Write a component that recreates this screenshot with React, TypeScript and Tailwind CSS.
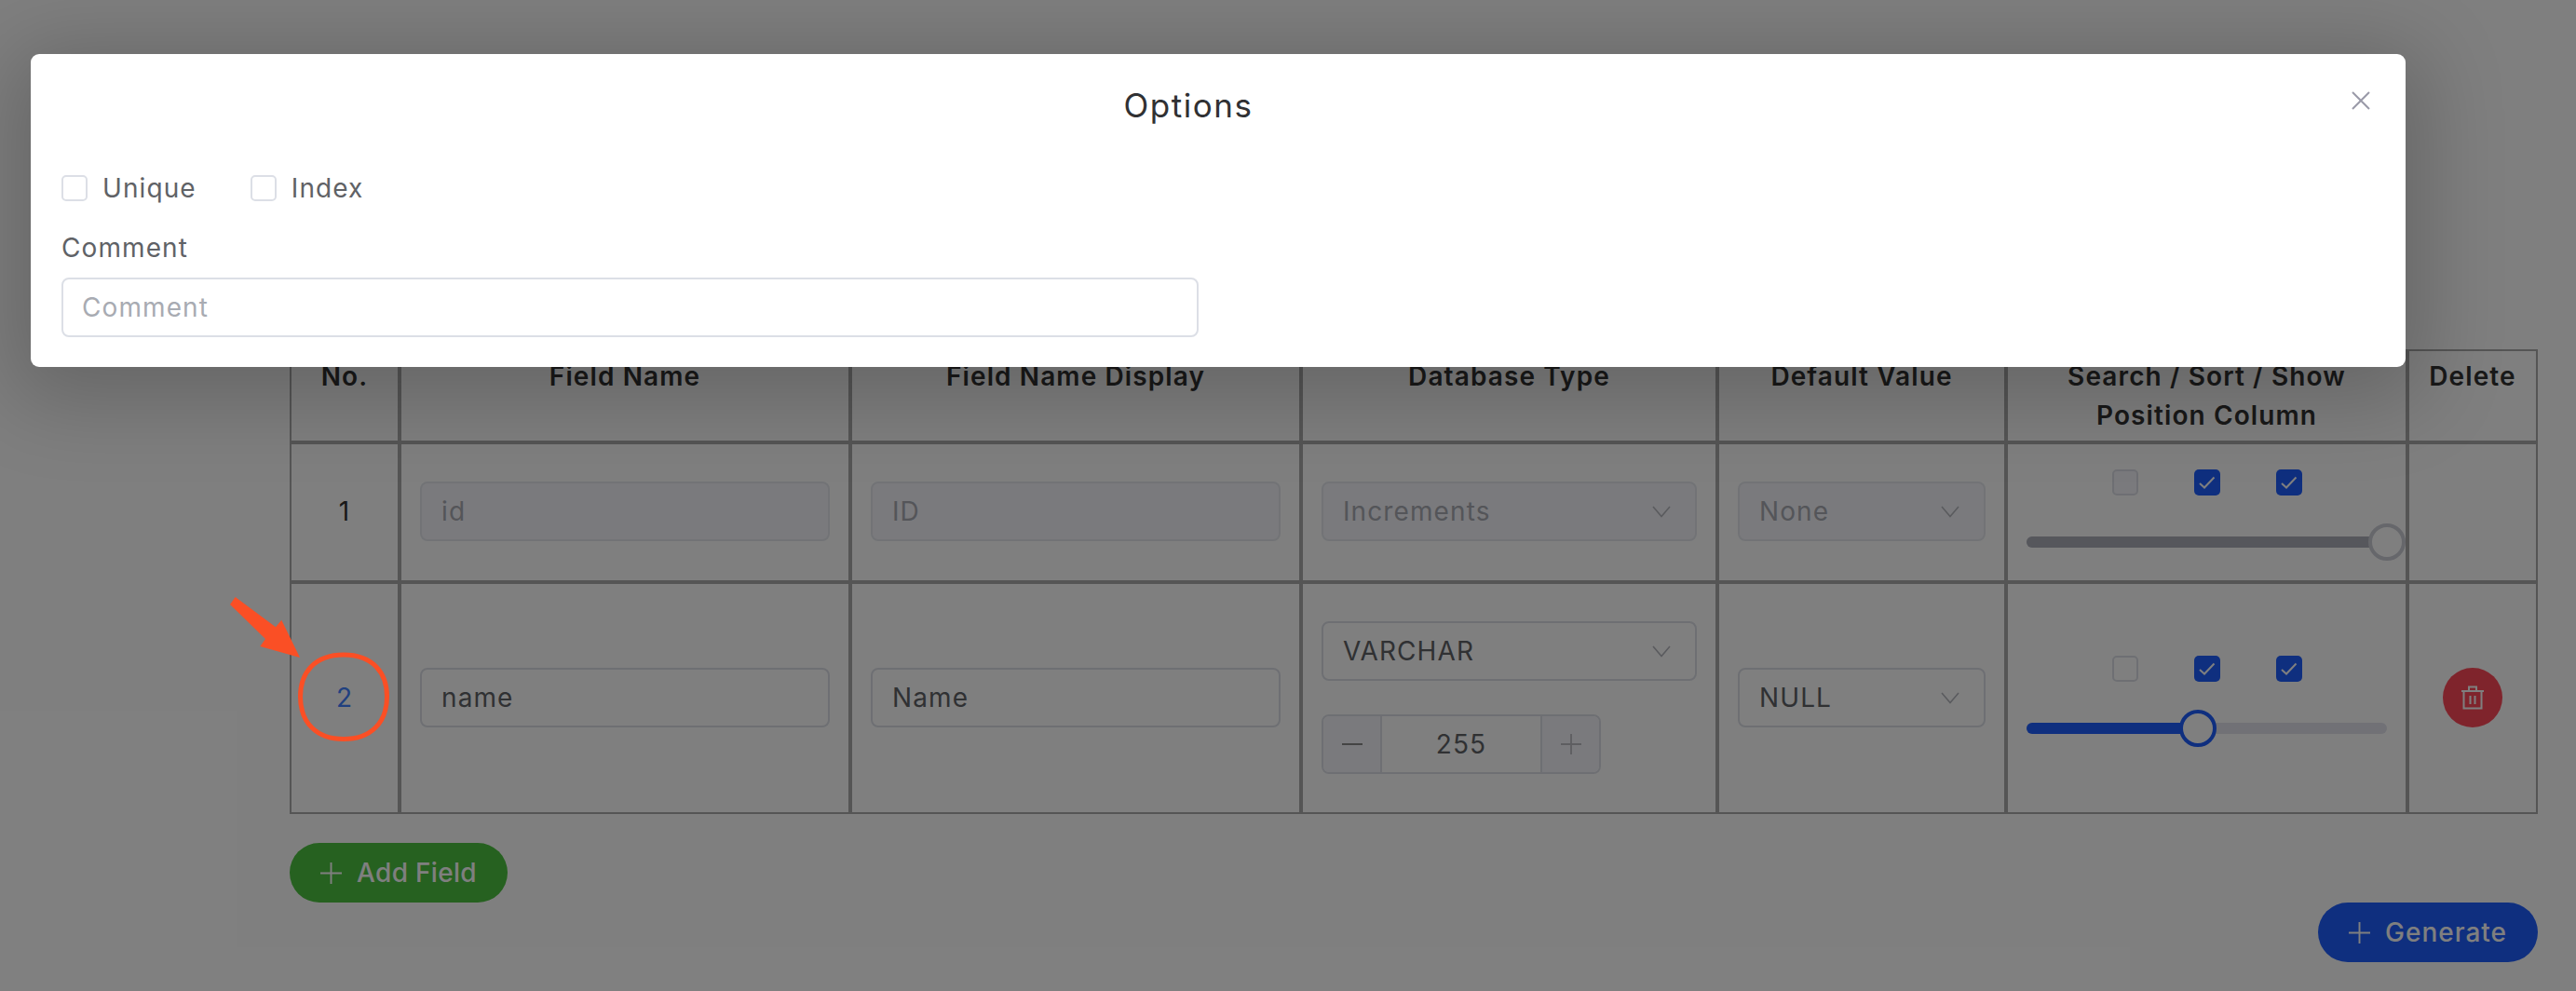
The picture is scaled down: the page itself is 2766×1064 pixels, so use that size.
import { useState } from "react"

const inputBase =
  "h-16 w-full rounded-lg border-2 px-[21px] text-[28px] tracking-[1.1px] outline-none placeholder:text-[#a8abb2]"
const inputCls = `${inputBase} border-[#dcdfe6] bg-white text-[#606266]`
const disabledCls = "border-[#e4e7ed] bg-[#f5f5fa] text-[#a8abb2]"
const thCls =
  "border-2 border-[#aaaaaa] px-2 py-[6px] align-top text-[28px] leading-[42px] font-semibold tracking-[1.1px] text-[#333333]"
const tdCls = "border-2 border-[#aaaaaa] px-5 pt-10 align-middle text-[28px] tracking-[1.1px]"
const tdSliderCls = "border-2 border-[#aaaaaa] px-5 align-middle"
const firstRow = `${tdCls} pb-[42px]`
const secondRow = `${tdCls} pb-[41px]`

function Chevron() {
  return (
    <svg width="20" height="13" viewBox="0 0 20 13" fill="none" stroke="currentColor" strokeWidth="1.6">
      <path d="M1 1l9 10.5L19 1" />
    </svg>
  )
}

function Plus({ size = 23 }: { size?: number }) {
  return (
    <svg width={size} height={size} viewBox="0 0 24 24" fill="none" stroke="currentColor" strokeWidth="2">
      <path d="M12 0v24M0 12h24" />
    </svg>
  )
}

function Select({ value, disabled }: { value: string; disabled?: boolean }) {
  return (
    <div
      className={`flex h-16 w-full items-center justify-between rounded-lg border-2 pr-[26px] pl-[21px] ${
        disabled ? `${disabledCls}` : "border-[#dcdfe6] bg-white text-[#606266]"
      }`}
    >
      <span>{value}</span>
      <span className="text-[#b4b6bd]">
        <Chevron />
      </span>
    </div>
  )
}

function Check({ on, disabled }: { on?: boolean; disabled?: boolean }) {
  if (on) {
    return (
      <span className="flex h-7 w-7 items-center justify-center rounded-[5px] bg-[#1e5eff] text-white">
        <svg width="18" height="14" viewBox="0 0 18 14" fill="none" stroke="currentColor" strokeWidth="2">
          <path d="M1 8l5 4.5L16.500 1.500" />
        </svg>
      </span>
    )
  }
  return (
    <span
      className={`block h-7 w-7 rounded-[5px] border-2 ${disabled ? "border-[#dcdfe6] bg-[#f5f5fa]" : "border-[#dcdfe6] bg-white"}`}
    />
  )
}

function PositionCell({ pct, disabled }: { pct: number; disabled?: boolean }) {
  return (
    <div className={`flex flex-col ${disabled ? "pt-1" : "pt-[6px]"}`}>
      <div className="flex justify-center gap-[60px]">
        <Check disabled={disabled} />
        <Check on />
        <Check on />
      </div>
      <div className="relative mt-[30px] h-[39px]">
        <div className="absolute top-[14px] h-3 w-full rounded-full bg-[#e2e3ec]" />
        <div
          className={`absolute top-[14px] h-3 rounded-full ${disabled ? "bg-[#acaeb8]" : "bg-[#1e5eff]"}`}
          style={{ width: `${pct}%` }}
        />
        <div
          className={`absolute top-0 h-10 w-10 -translate-x-1/2 rounded-full border-4 bg-white ${
            disabled ? "border-[#cdcfd7]" : "border-[#1e5eff]"
          }`}
          style={{ left: `${pct}%` }}
        />
      </div>
    </div>
  )
}

function Stepper() {
  return (
    <div className="mt-9 flex h-16 w-[300px] items-stretch overflow-hidden rounded-lg border-2 border-[#dcdfe6] text-[#606266]">
      <div className="flex w-[63px] items-center justify-center border-r-2 border-[#dcdfe6] bg-[#f5f5fa]">
        <span className="block h-[2px] w-[22px] bg-[#888888]" />
      </div>
      <div className="flex flex-1 items-center justify-center bg-white">255</div>
      <div className="flex w-[63px] items-center justify-center border-l-2 border-[#dcdfe6] bg-[#f5f5fa] text-[#bcbcc2]">
        <Plus size={22} />
      </div>
    </div>
  )
}

function Overlay() {
  return (
    <div className="absolute inset-0 bg-black/50">
      <div className="relative mt-[58px] ml-[33px] h-[336px] w-[2550px] rounded-[9px] bg-white px-[33px] shadow-[0_16px_90px_20px_rgba(0,0,0,0.2)]">
        <div className="pt-[30px] pr-[64px] text-center text-[35px] leading-[50px] tracking-[1.5px] text-[#303133]">
          Options
        </div>
        <button className="absolute top-[40px] right-[38px] text-[#9a9aa8]">
          <svg width="20" height="20" viewBox="0 0 20 20" fill="none" stroke="currentColor" strokeWidth="2">
            <path d="M1 1l18 18M19 1L1 19" />
          </svg>
        </button>
        <div className="mt-[43px] flex items-center gap-[58px] text-[28px] leading-[42px] tracking-[1.1px] text-[#606266]">
          <label className="flex items-center gap-4">
            <Check />
            Unique
          </label>
          <label className="flex items-center gap-4">
            <Check />
            Index
          </label>
        </div>
        <div className="mt-[22px] text-[28px] leading-[42px] tracking-[1.1px] text-[#606266]">Comment</div>
        <input className={`${inputCls} mt-[11px] w-[1221px]! pl-[20px]`} placeholder="Comment" />
      </div>
    </div>
  )
}

export default function App() {
  const [name] = useState("name")
  const [display] = useState("Name")

  return (
    <div className="relative h-[1064px] overflow-hidden bg-white font-['Inter','Liberation_Sans',sans-serif]">
      <div className="pt-[375px] pr-[41px] pl-[311px]">
        <table className="w-[2414px] table-fixed border-separate border-spacing-0">
          <colgroup>
            <col className="w-[118px]" />
            <col className="w-[484px]" />
            <col className="w-[484px]" />
            <col className="w-[447px]" />
            <col className="w-[310px]" />
            <col className="w-[431px]" />
            <col className="w-[140px]" />
          </colgroup>
          <thead>
            <tr>
              <th className={thCls}>No.</th>
              <th className={thCls}>Field Name</th>
              <th className={thCls}>Field Name Display</th>
              <th className={thCls}>Database Type</th>
              <th className={thCls}>Default Value</th>
              <th className={thCls}>
                Search / Sort / Show
                <br />
                Position Column
              </th>
              <th className={thCls}>Delete</th>
            </tr>
          </thead>
          <tbody>
            <tr>
              <td className={`${firstRow} text-center text-[#333333]`}>1</td>
              <td className={firstRow}>
                <input disabled value="id" readOnly className={`${inputBase} ${disabledCls}`} />
              </td>
              <td className={firstRow}>
                <input disabled value="ID" readOnly className={`${inputBase} ${disabledCls}`} />
              </td>
              <td className={firstRow}>
                <Select value="Increments" disabled />
              </td>
              <td className={firstRow}>
                <Select value="None" disabled />
              </td>
              <td className={tdSliderCls}>
                <PositionCell pct={100} disabled />
              </td>
              <td className={firstRow} />
            </tr>
            <tr>
              <td className={`${secondRow} text-center text-[#4080ff]`}>2</td>
              <td className={secondRow}>
                <input value={name} readOnly className={inputCls} />
              </td>
              <td className={secondRow}>
                <input value={display} readOnly className={inputCls} />
              </td>
              <td className={secondRow}>
                <Select value="VARCHAR" />
                <Stepper />
              </td>
              <td className={secondRow}>
                <Select value="NULL" />
              </td>
              <td className={tdSliderCls}>
                <PositionCell pct={47.500} />
              </td>
              <td className={secondRow}>
                <button className="mx-auto flex h-16 w-16 items-center justify-center rounded-full bg-[#ff4858] text-white">
                  <svg width="26" height="26" viewBox="0 0 26 26" fill="none" stroke="currentColor" strokeWidth="2">
                    <path d="M1 6h24M9 6V1.500h8V6M3.500 6v18.500h19V6M10.500 11v9M15.500 11v9" />
                  </svg>
                </button>
              </td>
            </tr>
          </tbody>
        </table>
        <button className="mt-[31px] flex h-16 w-[234px] items-center justify-center gap-4 rounded-full bg-[#4cc240] text-[28px] font-medium tracking-[0.3px] text-white">
          <Plus />
          Add Field
        </button>
        <div className="flex justify-end">
          <button className="flex h-16 w-[236px] items-center justify-center gap-4 rounded-full bg-[#1e5eff] text-[28px] font-medium tracking-[1px] text-white">
            <Plus />
            Generate
          </button>
        </div>
      </div>

      <Overlay />

      {/* annotation drawn on top of the screenshot */}
      <svg className="absolute top-[630px] left-[240px]" width="190" height="175" viewBox="240 630 190 175" fill="none">
        <path d="M252.700 641L247 649L285 686L279.300 694L322 706L302.300 665.700L296 673.300Z" fill="#fa4f25" />
        <path
          d="M369 703C400 703 415.500 722 415.500 748C415.500 776 398 793.500 369 793.500C340 793.500 322.500 776 322.500 748C322.500 722 338 703 369 703Z"
          stroke="#fa4f25"
          strokeWidth="5"
        />
      </svg>
    </div>
  )
}
